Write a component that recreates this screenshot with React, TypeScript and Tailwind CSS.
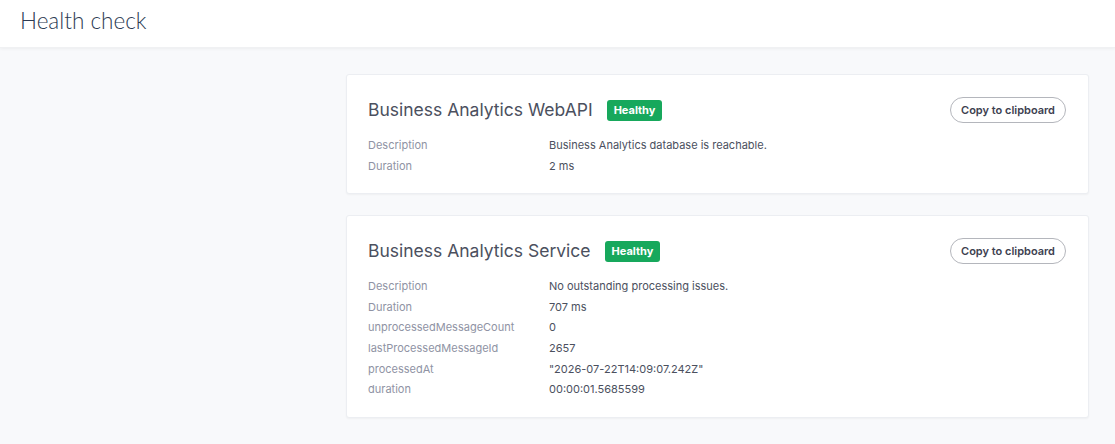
const checks = [
  {
    name: 'Business Analytics WebAPI',
    status: 'Healthy',
    rows: [
      ['Description', 'Business Analytics database is reachable.'],
      ['Duration', '2 ms'],
    ],
  },
  {
    name: 'Business Analytics Service',
    status: 'Healthy',
    rows: [
      ['Description', 'No outstanding processing issues.'],
      ['Duration', '707 ms'],
      ['unprocessedMessageCount', '0'],
      ['lastProcessedMessageId', '2657'],
      ['processedAt', '"2026-07-22T14:09:07.242Z"'],
      ['duration', '00:00:01.5685599'],
    ],
  },
];

function CheckCard({ check }: { check: (typeof checks)[number] }) {
  return (
    <div className="bg-white border border-[#eceef2] rounded-[3px] shadow-[0_1px_2px_rgba(0,0,0,0.04)] px-[21px] pt-[22px] pb-[17px]">
      <div className="flex items-center justify-between h-[26px]">
        <div className="flex items-center gap-[14px]">
          <h2 className="text-[17.5px] text-[#4b505e]">{check.name}</h2>
          <span className="bg-[#17a85c] text-white text-[11px] font-bold rounded-[3px] px-[7px] h-[21px] flex items-center">
            {check.status}
          </span>
        </div>
        <button className="h-[26px] px-[10px] rounded-full border border-[#b4b6bc] text-[11px] font-semibold text-[#3d4150] bg-white mr-[1px]">
          Copy to clipboard
        </button>
      </div>
      <div className="mt-[12px]">
        {check.rows.map(([k, v]) => (
          <div key={k} className="flex text-[11px] leading-[20.6px]">
            <div className="w-[181px] text-[#8f93a4]">{k}</div>
            <div className="text-[#4b505e]">{v}</div>
          </div>
        ))}
      </div>
    </div>
  );
}

export default function App() {
  return (
    <div className="min-h-[444px] bg-[#f8f9fb] font-['Inter',sans-serif]">
      <header className="h-[48px] bg-white flex items-center px-[20px] pb-[5px] shadow-[0_1px_3px_rgba(0,0,0,0.05)] border-b border-[#f0f1f3]">
        <h1 className="text-[22.5px] text-[#2c3a52] font-light font-['Lato',sans-serif]">Health check</h1>
      </header>
      <main className="pl-[346px] pr-[26px] pt-[26px] flex flex-col gap-[21px]">
        {checks.map((c) => (
          <CheckCard key={c.name} check={c} />
        ))}
      </main>
    </div>
  );
}
